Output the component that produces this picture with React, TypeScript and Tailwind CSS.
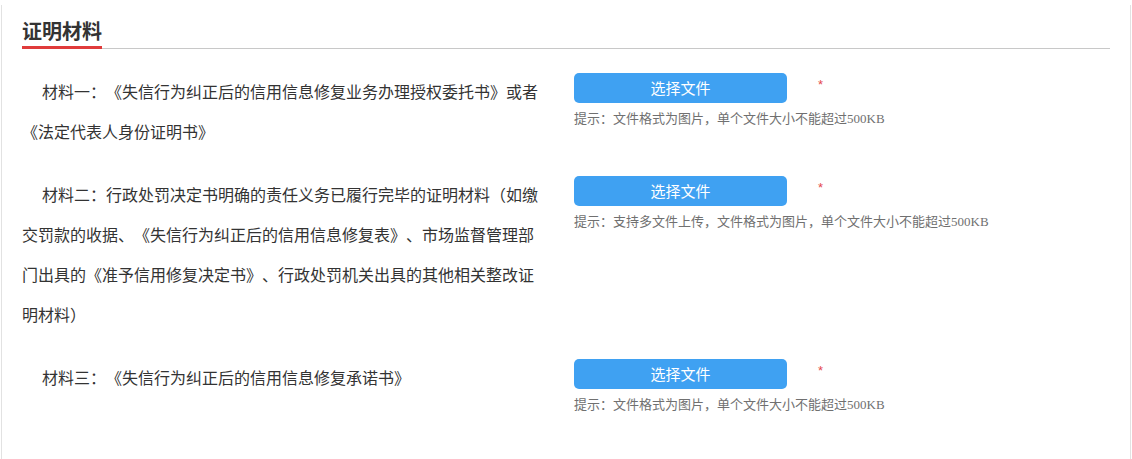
const materials = [
  {
    label: "材料一：《失信行为纠正后的信用信息修复业务办理授权委托书》或者《法定代表人身份证明书》",
    tip: "提示：文件格式为图片，单个文件大小不能超过500KB",
  },
  {
    label:
      "材料二：行政处罚决定书明确的责任义务已履行完毕的证明材料（如缴交罚款的收据、《失信行为纠正后的信用信息修复表》、市场监督管理部门出具的《准予信用修复决定书》、行政处罚机关出具的其他相关整改证明材料）",
    tip: "提示：支持多文件上传，文件格式为图片，单个文件大小不能超过500KB",
  },
  {
    label: "材料三：《失信行为纠正后的信用信息修复承诺书》",
    tip: "提示：文件格式为图片，单个文件大小不能超过500KB",
  },
];

const MaterialRow = ({ label, tip }: { label: string; tip: string }) => (
  <div className="flex items-start mb-[25px]">
    {/* Description */}
    <p className="-mt-[2px] w-[518px] shrink-0 text-[16px] leading-[40px] text-[#333] indent-[20px] [text-spacing-trim:space-all] font-['Noto_Sans_CJK_SC',sans-serif]">
      {label}
    </p>

    {/* Upload */}
    <div className="ml-[34px] flex flex-col">
      <div className="flex items-start">
        <button className="w-[213px] h-[30px] rounded-[5px] bg-[#3fa1f2] text-white text-[15px] leading-[30px] font-['Noto_Sans_CJK_SC',sans-serif]">
          选择文件
        </button>
        <span className="ml-[31px] mt-[6px] text-[13px] leading-[12px] text-[#e5484d] font-['Liberation_Sans',sans-serif]">
          *
        </span>
      </div>
      <p className="mt-[6px] text-[13px] leading-[20px] text-[#707070] whitespace-nowrap font-['Liberation_Serif','Noto_Sans_CJK_SC',serif]">
        {tip}
      </p>
    </div>
  </div>
);

export default function App() {
  return (
    <div className="w-[1132px] h-[459px] bg-white overflow-hidden pt-[5px]">
      <div className="ml-[1px] w-[1130px] h-[460px] border-x border-[#e2e2e2] px-[20px] pt-[12px]">
        {/* Header */}
        <div className="border-b border-[#c8c8c8]">
          <span className="inline-block -mb-[1px] pb-[1px] border-b-[3px] border-[#e03b3b] text-[20px] leading-[28px] font-bold text-[#333] font-['Noto_Sans_CJK_SC',sans-serif]">
            证明材料
          </span>
        </div>

        <div className="pt-[24px]">
          {materials.map((m) => (
            <MaterialRow key={m.label} label={m.label} tip={m.tip} />
          ))}
        </div>
      </div>
    </div>
  );
}
